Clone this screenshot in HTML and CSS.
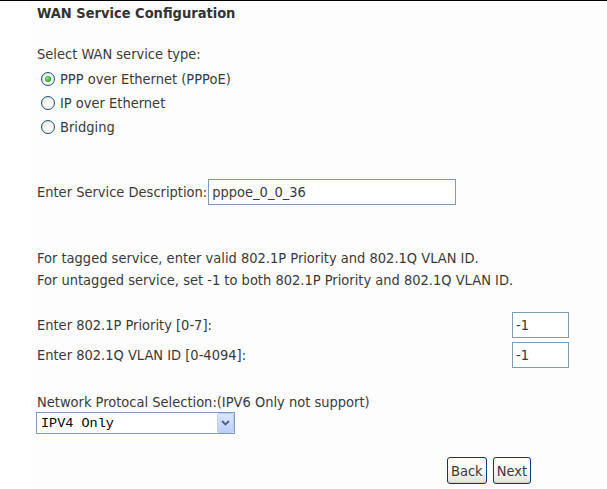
FILE: index.html
```html
<!DOCTYPE html>
<html>
<head>
<meta charset="utf-8">
<title>WAN Service Configuration</title>
<link rel="stylesheet" href="styles.css">
</head>
<body>
<div class="page">
  <div class="content">
    <div class="title">WAN Service Configuration</div>

    <div class="line select-label">Select WAN service type:</div>
    <div class="radios">
      <label class="radio-row"><input type="radio" name="svc" checked><span>PPP over Ethernet (PPPoE)</span></label>
      <label class="radio-row"><input type="radio" name="svc"><span>IP over Ethernet</span></label>
      <label class="radio-row"><input type="radio" name="svc"><span>Bridging</span></label>
    </div>

    <div class="desc-row">
      <span>Enter Service Description:</span><input class="text desc" type="text" value="pppoe_0_0_36">
    </div>

    <div class="notes">
      <div class="note">For tagged service, enter valid 802.1P Priority and 802.1Q VLAN ID.</div>
      <div class="note">For untagged service, set -1 to both 802.1P Priority and 802.1Q VLAN ID.</div>
    </div>

    <div class="vlan">
      <div class="vlan-row"><span>Enter 802.1P Priority [0-7]:</span><input class="text small" type="text" value="-1"></div>
      <div class="vlan-row"><span>Enter 802.1Q VLAN ID [0-4094]:</span><input class="text small" type="text" value="-1"></div>
    </div>

    <div class="proto-label">Network Protocal Selection:(IPV6 Only not support)</div>
    <div class="select-wrap">
      <select class="proto">
        <option>IPV4 Only</option>
        <option>IPV4&amp;IPV6(Dual Stack)</option>
      </select>
      <span class="drop-btn">
        <svg width="9" height="6" viewBox="0 0 9 6"><path d="M1 1 L4.5 4.5 L8 1" fill="none" stroke="#4d6185" stroke-width="1.8"/></svg>
      </span>
    </div>

    <div class="buttons">
      <button class="btn">Back</button>
      <button class="btn">Next</button>
    </div>
  </div>
</div>
</body>
</html>
```
FILE: styles.css
```css
* { box-sizing: border-box; }
html, body {
  margin: 0;
  padding: 0;
  background: #ffffff;
}
body {
  font-family: "DejaVu Sans Condensed", "DejaVu Sans", Tahoma, sans-serif;
  font-size: 14.5px;
  color: #3a3a3a;
}
.page {
  border-top: 1px solid #000;
  width: 607px;
  height: 489px;
}
.content {
  margin-left: 30px;
  padding-left: 7px;
  padding-right: 38px;
  background: #fdfdfd;
  height: 488px;
}
.title {
  font-weight: bold;
  line-height: 24px;
  height: 24px;
  color: #333;
}
.line { line-height: 24px; }
.select-label { margin-top: 17px; }
.radios { margin-top: 1px; }
.radio-row {
  display: flex;
  align-items: center;
  height: 24px;
  padding-left: 4px;
}
.radio-row input {
  appearance: none;
  -webkit-appearance: none;
  width: 14px;
  height: 14px;
  margin: 0 5px 0 0;
  border: 1px solid #1c5180;
  border-radius: 50%;
  background: radial-gradient(circle at 60% 60%, #ffffff 0%, #f4f4f0 45%, #d6d5cc 100%);
  position: relative;
}
.radio-row input:checked::after {
  content: "";
  position: absolute;
  left: 3px;
  top: 3px;
  width: 6px;
  height: 6px;
  border-radius: 50%;
  background: radial-gradient(circle at 40% 40%, #8ee38e 0%, #21a121 70%, #1a8a1a 100%);
}
.desc-row {
  margin-top: 40px;
  display: flex;
  align-items: center;
  height: 26px;
}
.text {
  font-family: "DejaVu Sans Condensed", "DejaVu Sans", Tahoma, sans-serif;
  font-size: 14.5px;
  color: #3a3a3a;
  border: 1px solid #7f9db9;
  background: #fff;
  padding: 0 3px;
  height: 26px;
  outline: none;
}
.desc {
  width: 248px;
  margin-left: 1px;
}
.notes { margin-top: 42px; }
.note { line-height: 22px; }
.vlan {
  margin-top: 21px;
  display: flex;
  flex-direction: column;
  gap: 4px;
}
.vlan-row {
  display: flex;
  align-items: center;
  justify-content: space-between;
  height: 26px;
}
.small { width: 57px; }
.proto-label {
  margin-top: 24px;
  line-height: 20px;
}
.select-wrap {
  position: relative;
  width: 199px;
  height: 22px;
  margin-left: -1px;
}
.proto {
  appearance: none;
  -webkit-appearance: none;
  width: 199px;
  height: 22px;
  border: 1px solid #7f9db9;
  background: #fff;
  font-family: "Liberation Mono", "DejaVu Sans Mono", monospace;
  font-size: 13.5px;
  color: #000;
  padding: 0 0 0 4px;
  border-radius: 0;
  outline: none;
}
.drop-btn {
  position: absolute;
  right: 1px;
  top: 1px;
  width: 17px;
  height: 20px;
  border: 1px solid #b9cdf4;
  border-radius: 2px;
  background: linear-gradient(#dbe6fd, #bcd0fa);
  display: flex;
  align-items: center;
  justify-content: center;
  pointer-events: none;
}
.buttons {
  margin-top: 23px;
  display: flex;
  justify-content: flex-end;
  gap: 6px;
  padding-right: 38px;
}
.btn {
  font-family: "DejaVu Sans Condensed", "DejaVu Sans", Tahoma, sans-serif;
  font-size: 14.5px;
  color: #3a3a3a;
  height: 27px;
  padding: 0 3px;
  border: 1px solid #003c74;
  border-radius: 3px;
  background: linear-gradient(#ffffff, #f4f4f0 60%, #e3e2da);
  box-shadow: inset 0 -1px 0 #d6d0c5;
}
```
